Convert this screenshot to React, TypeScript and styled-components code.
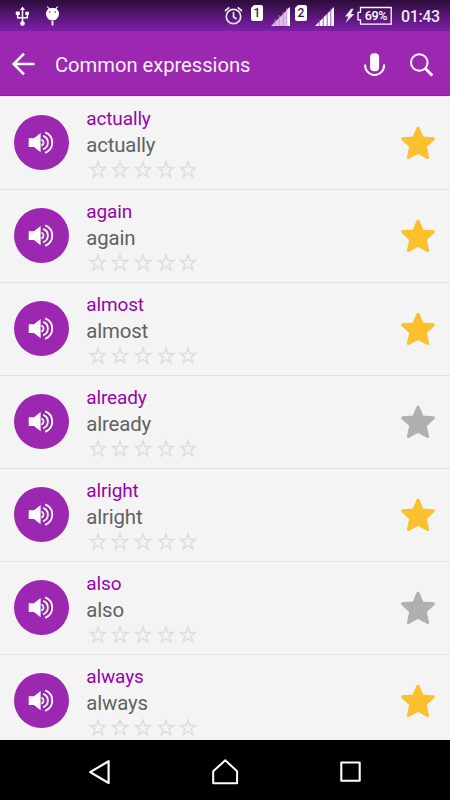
import React from "react";
import styled, { createGlobalStyle } from "styled-components";

const GlobalStyle = createGlobalStyle`
  html, body { margin: 0; padding: 0; background: #000; }
  *, *::before, *::after { box-sizing: border-box; }
  svg { display: block; flex: none; }
`;

const Screen = styled.div`
  width: 450px;
  height: 800px;
  display: flex;
  flex-direction: column;
  overflow: hidden;
  background: #f4f4f4;
  font-family: Roboto, "Liberation Sans", sans-serif;
`;

const StatusBar = styled.header`
  flex: none;
  height: 31px;
  display: flex;
  align-items: flex-start;
  justify-content: space-between;
  padding: 0 10px 0 15px;
  background: linear-gradient(#2c0b3a 0%, #3c1050 20%, #5f1880 60%, #7a1fa2 95%);
`;

const StatusIcons = styled.div`
  display: flex;
  gap: 15px;
`;

const StatusGroup = styled.div`
  display: flex;
  height: 31px;
`;

const Spacer = styled.span<{ $w: number }>`
  flex: none;
  width: ${(p) => p.$w}px;
`;

const Clock = styled.span`
  margin-left: 9px;
  width: 39px;
  font-size: 16px;
  font-weight: 500;
  line-height: 33px;
  color: #f1e6f5;
  white-space: nowrap;
  letter-spacing: -0.4px;
`;

const Battery = styled.div`
  display: grid;
  width: 35px;
  height: 31px;
  & > * { grid-area: 1 / 1; }
`;

const BatteryLevel = styled.span`
  padding-left: 3px;
  text-align: center;
  font-size: 12.5px;
  font-weight: 500;
  line-height: 32px;
  color: #fff;
  letter-spacing: -0.3px;
`;

const SimBadge = styled.span`
  width: 12px;
  height: 16px;
  margin-top: 5px;
  border-radius: 2px;
  background: #fff;
  clip-path: polygon(3px 0, 100% 0, 100% 100%, 0 100%, 0 3px);
  color: #3f1255;
  font-size: 12px;
  font-weight: 500;
  line-height: 17px;
  text-align: center;
`;

const AppBar = styled.div`
  flex: none;
  height: 65px;
  display: flex;
  align-items: center;
  padding: 0 16px 0 11px;
  background: #9c27b0;
  border-bottom: 1px solid #9417a8;
`;

const Title = styled.h1`
  flex: 1;
  margin: 4px 0 0 19px;
  color: #f8f0fa;
  font-size: 20.2px;
  font-weight: 400;
  line-height: 28px;
  letter-spacing: -0.03px;
`;

const Actions = styled.div`
  display: flex;
  align-items: center;
  gap: 24px;
  padding-top: 3px;
`;

const List = styled.ul`
  flex: 1;
  min-height: 0;
  margin: 0;
  padding: 0.6px 0 0;
  overflow: hidden;
  list-style: none;
  box-shadow: inset 0 1px #f0e4f3;
`;

const Row = styled.li`
  height: 93.05px;
  display: flex;
  align-items: flex-start;
  padding: 0 14px;
  border-bottom: 1px solid #e1e1e1;
`;

const SpeakButton = styled.div`
  flex: none;
  width: 55px;
  height: 55px;
  margin-top: 18.3px;
  display: flex;
  align-items: center;
  justify-content: center;
  border-radius: 50%;
  background: #9c27b0;
`;

const Texts = styled.div`
  flex: 1;
  margin-left: 17.3px;
  padding-top: 9.6px;
`;

const Phrase = styled.div`
  color: #9605aa;
  font-size: 19px;
  line-height: 26px;
  letter-spacing: -0.14px;
`;

const Translation = styled.div`
  color: #626262;
  font-size: 20.4px;
  line-height: 27px;
  letter-spacing: -0.16px;
`;

const Rating = styled.div`
  display: flex;
  gap: 2.6px;
  margin: -0.6px 0 0 1.5px;
`;

const Favourite = styled.div<{ $on: boolean }>`
  margin-top: 28.2px;
  color: ${(p) => (p.$on ? "#fbc02d" : "#b0b0b0")};
`;

const NavBar = styled.nav`
  flex: none;
  height: 60px;
  display: flex;
  align-items: center;
  padding: 3px 88px 0;
  justify-content: space-between;
  background: #000;
`;

const UsbIcon = () => (
  <svg width="15" height="31" viewBox="0 0 15 31" fill="none" stroke="#fff" strokeWidth="1.5">
    <path d="M7.5 9v14M2.7 14v3.700h9.600v-4" />
    <path d="M7.500 6.500l2.600 3.600H4.900z" fill="#fff" stroke="none" />
    <circle cx="7.500" cy="23.500" r="2.300" fill="#fff" stroke="none" />
    <path d="M.8 11.500h4v3.600h-4zM10.300 11.800h3.600v3.200h-3.600z" fill="#fff" stroke="none" />
  </svg>
);

const DroidIcon = () => (
  <svg width="15" height="31" viewBox="0 0 15 31">
    <path d="M2.300 6.500l2.400 3M12.700 6.500l-2.400 3" stroke="#fff" strokeWidth="1.200" />
    <path d="M1 13.500C1 10 4 8 7.500 8s6.500 2 6.500 5.500-2.500 7-6.500 7-6.500-3.500-6.500-7z" fill="#fff" />
    <path d="M7.500 21v4.500" stroke="#fff" strokeWidth="1.800" />
    <circle cx="4.800" cy="12" r=".8" fill="#6b1b8d" />
    <circle cx="10.200" cy="12" r=".8" fill="#6b1b8d" />
  </svg>
);

const AlarmIcon = () => (
  <svg width="19" height="31" viewBox="0 0 19 31" fill="none" stroke="#eee2f3" strokeWidth="1.700">
    <circle cx="9.500" cy="16.500" r="7.200" />
    <path d="M1 11L5.300 7.400M18 11L13.700 7.400" />
    <path d="M9.500 12v4.800l3 2.200" />
  </svg>
);

const SignalIcon = ({ dim }: { dim?: boolean }) => (
  <svg width="20" height="31" viewBox="0 0 20 31">
    <path d="M1 26L20 7v19z" fill={dim ? "#d9c2e2" : "#fff"} />
    {dim && <path d="M16.800 10.200L20 7v19h-3.200z" fill="#fff" />}
    <path
      d="M5.200 19v7M9.200 15v11M13.200 12v14M16.800 8v18"
      stroke={dim ? "#b68ac8" : "#7a369a"}
      strokeWidth=".8"
    />
  </svg>
);

const BoltIcon = () => (
  <svg width="11" height="31" viewBox="0 0 11 31">
    <path d="M7.200 8.800L1 16.500h3.500L1.500 23 10.300 14H6.900L9.500 8.800z" fill="#f4eaf7" />
  </svg>
);

const BatteryOutline = () => (
  <svg width="35" height="31" viewBox="0 0 35 31" fill="none" stroke="#fff" strokeWidth="1.300">
    <path d="M3.500 7.500h30.700v16.600H3.500v-4.200H1v-7.500h2.500z" />
  </svg>
);

const BackArrow = () => (
  <svg width="25" height="30" viewBox="0 0 25 30" fill="none" stroke="#fff" strokeWidth="2.600">
    <path d="M23.500 16H3M13 5.700L2.700 16 13 26.300" />
  </svg>
);

const MicIcon = () => (
  <svg width="22" height="24" viewBox="0 0 22 24">
    <rect x="6.100" y=".3" width="9" height="18" rx="4" fill="#fff" />
    <path d="M1.100 11.500v.700c0 5.500 4.300 9.800 9.500 9.800s9.500-4.300 9.500-9.800v-.7" fill="none" stroke="#fff" strokeWidth="2" />
  </svg>
);

const SearchIcon = () => (
  <svg width="24" height="24" viewBox="0 0 24 24" fill="none" stroke="#fff">
    <circle cx="9.300" cy="9.500" r="8.300" strokeWidth="2" />
    <path d="M15.300 15.500l7 7" strokeWidth="2.900" />
  </svg>
);

const SpeakerIcon = () => (
  <svg width="27" height="25" viewBox="0 0 27 25" fill="none" stroke="#fff" strokeWidth="1.800">
    <path d="M.7 8.300H6L12.600 2.900v19.300L6 16.900H.7z" fill="#fff" stroke="none" />
    <path d="M13.400 9.500a3.300 3.300 0 0 1 0 6.200" />
    <path d="M15.100 5.900a7.100 7.100 0 0 1 0 13.400" />
    <path d="M17.100 2.300a11 11 0 0 1 0 20.600" />
  </svg>
);

const RatingStar = () => (
  <svg width="20" height="20" viewBox="0 0 20 20" fill="none" stroke="#dedede" strokeWidth="1.500">
    <path d="M10 2.800l1.900 5.600h5.700l-4.500 3.700 1.700 5.700-4.800-3.400-4.800 3.400 1.700-5.700-4.500-3.700h5.700z" />
  </svg>
);

const StarIcon = () => (
  <svg width="36" height="36" viewBox="0 0 36 36" fill="currentColor" stroke="currentColor" strokeWidth="3" strokeLinejoin="round">
    <path d="M18 3.200l4.200 9.700 11.200.900-8.200 7.600 2.400 11.100L18 27.200l-9.600 5.300 2.400-11.100-8.200-7.600 11.200-.9z" />
  </svg>
);

const BackKey = () => (
  <svg width="24" height="28" viewBox="0 0 24 28" fill="none" stroke="#fff" strokeWidth="2.200" strokeLinejoin="round">
    <path d="M20.600 3.200v21.800L2.200 14.100z" />
  </svg>
);

const HomeKey = () => (
  <svg width="28" height="28" viewBox="0 0 28 28" fill="none" stroke="#fff" strokeWidth="2" strokeLinejoin="round">
    <path d="M2.200 13.200L14.300 2.300l11.800 10.900v12H2.200z" />
  </svg>
);

const RecentKey = () => (
  <svg width="24" height="28" viewBox="0 0 24 28" fill="none" stroke="#fff" strokeWidth="2.100" strokeLinejoin="round">
    <rect x="3.300" y="4.500" width="18.400" height="18.200" />
  </svg>
);

const entries = [
  { word: "actually", favourite: true },
  { word: "again", favourite: true },
  { word: "almost", favourite: true },
  { word: "already", favourite: false },
  { word: "alright", favourite: true },
  { word: "also", favourite: false },
  { word: "always", favourite: true },
];

const Entry = ({ word, favourite }: { word: string; favourite: boolean }) => (
  <Row>
    <SpeakButton>
      <SpeakerIcon />
    </SpeakButton>
    <Texts>
      <Phrase>{word}</Phrase>
      <Translation>{word}</Translation>
      <Rating>
        {[1, 2, 3, 4, 5].map((n) => (
          <RatingStar key={n} />
        ))}
      </Rating>
    </Texts>
    <Favourite $on={favourite}>
      <StarIcon />
    </Favourite>
  </Row>
);

export default function App() {
  return (
    <Screen>
      <GlobalStyle />
      <StatusBar>
        <StatusIcons>
          <UsbIcon />
          <DroidIcon />
        </StatusIcons>
        <StatusGroup>
          <AlarmIcon />
          <Spacer $w={8} />
          <SimBadge>1</SimBadge>
          <Spacer $w={7} />
          <SignalIcon dim />
          <Spacer $w={5} />
          <SimBadge>2</SimBadge>
          <Spacer $w={7} />
          <SignalIcon />
          <Spacer $w={10} />
          <BoltIcon />
          <Spacer $w={2} />
          <Battery>
            <BatteryOutline />
            <BatteryLevel>69%</BatteryLevel>
          </Battery>
          <Clock>01:43</Clock>
        </StatusGroup>
      </StatusBar>
      <AppBar>
        <BackArrow />
        <Title>Common expressions</Title>
        <Actions>
          <MicIcon />
          <SearchIcon />
        </Actions>
      </AppBar>
      <List>
        {entries.map((e) => (
          <Entry key={e.word} {...e} />
        ))}
      </List>
      <NavBar>
        <BackKey />
        <HomeKey />
        <RecentKey />
      </NavBar>
    </Screen>
  );
}
